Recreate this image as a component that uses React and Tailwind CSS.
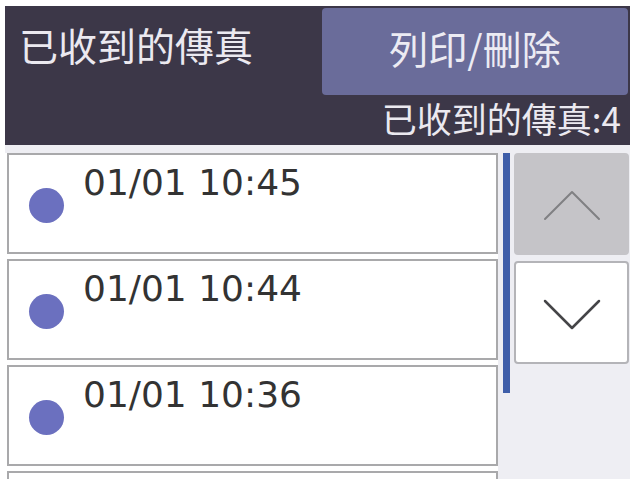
const cjk = { fontFamily: '"Noto Sans CJK TC", "Noto Sans", sans-serif' };
const num = { fontFamily: '"DejaVu Sans", "Noto Sans CJK TC", sans-serif' };

const faxes = ["01/01 10:45", "01/01 10:44", "01/01 10:36"];

function Chevron({ up, color, width }) {
  return (
    <svg width="58" height="32" viewBox="0 0 58 32" fill="none">
      <polyline
        points={up ? "2,30 29,3 56,30" : "2,2 29,29 56,2"}
        stroke={color}
        strokeWidth={width}
        strokeLinecap="round"
        strokeLinejoin="round"
      />
    </svg>
  );
}

export default function App() {
  return (
    <div className="w-[634px] h-[479px] overflow-hidden bg-white pt-[6px] pl-[5px] pr-[4px] flex flex-col">
      <div className="h-[139px] shrink-0 bg-[#3c3748] flex flex-col" style={cjk}>
        <div className="flex items-start pt-[2px] pr-[2px]">
          <div className="flex-1 pl-[14px] pt-[13px] text-[39px] leading-[46px] text-[#ebe9f0]">已收到的傳真</div>
          <div className="w-[306px] h-[87px] rounded-[4px] bg-[#6a6c9a] flex items-center justify-center pb-[8px] text-[39px] text-[#ecebf3]">
            列印/刪除
          </div>
        </div>
        <div className="flex-1 flex items-start justify-end pr-[9px] pt-[3px] text-[35px] leading-[40px] text-[#ebe9f0]">
          已收到的傳真:4
        </div>
      </div>

      <div className="flex-1 flex bg-[#eeeef3] pt-[8px] overflow-hidden">
        <div className="w-[493px] shrink-0 pl-[2px] flex flex-col gap-[5px] bg-white">
          {faxes.concat([""]).map((t, i) => (
            <div key={i} className="h-[101px] shrink-0 bg-white border-2 border-[#a9a9ab] flex items-start">
              {t && (
                <>
                  <div className="w-[35px] h-[35px] rounded-full bg-[#6b70bf] ml-[20px] mt-[33px] shrink-0" />
                  <div className="ml-[19px] mt-[8px] text-[36px] leading-[40px] text-[#333333]" style={num}>
                    {t}
                  </div>
                </>
              )}
            </div>
          ))}
        </div>
        <div className="w-[16px] shrink-0 flex justify-center">
          <div className="w-[7px] h-[240px] bg-[#3f5ea9]" />
        </div>
        <div className="flex-1 flex flex-col gap-[6px] pr-[1px]">
          <div className="h-[102px] rounded-[4px] bg-[#c5c4c8] flex items-center justify-center pt-[2px]">
            <Chevron up color="#808083" width={2} />
          </div>
          <div className="h-[103px] rounded-[4px] bg-white border-2 border-[#b4b4b8] flex items-center justify-center pt-[4px]">
            <Chevron color="#454548" width={2.5} />
          </div>
        </div>
      </div>
    </div>
  );
}
